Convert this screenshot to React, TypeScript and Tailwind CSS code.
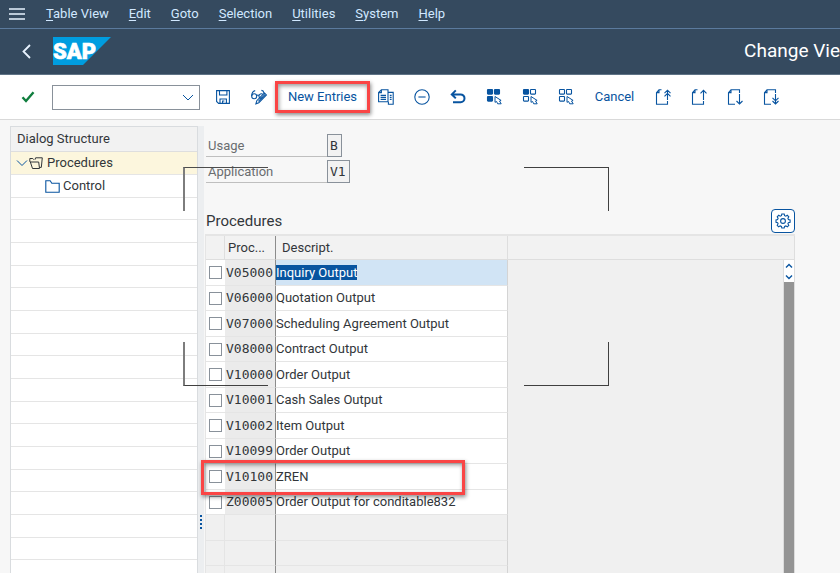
import React from "react";

const menus = ["Table View", "Edit", "Goto", "Selection", "Utilities", "System", "Help"];

const rows = [
  { code: "V05000", text: "Inquiry Output" },
  { code: "V06000", text: "Quotation Output" },
  { code: "V07000", text: "Scheduling Agreement Output" },
  { code: "V08000", text: "Contract Output" },
  { code: "V10000", text: "Order Output" },
  { code: "V10001", text: "Cash Sales Output" },
  { code: "V10002", text: "Item Output" },
  { code: "V10099", text: "Order Output" },
  { code: "V10100", text: "ZREN" },
  { code: "Z00005", text: "Order Output for conditable832" },
];
const emptyRows = 30;
const treeRows = 40;

function Icon({ children }: { children: React.ReactNode }) {
  return (
    <svg width="18" height="18" viewBox="0 0 18 18" fill="none" stroke="currentColor" strokeWidth="1.1" aria-hidden="true">
      {children}
    </svg>
  );
}

function ToolButton({ label, children }: { label: string; children: React.ReactNode }) {
  return (
    <button type="button" aria-label={label} className="flex h-9 w-9 shrink-0 items-center justify-center text-[#0854a0]">
      <Icon>{children}</Icon>
    </button>
  );
}

function Grid({ filled }: { filled: number }) {
  const cells = [
    [2.5, 1.5],
    [9.5, 1.5],
    [2.5, 8.5],
  ];
  const solid = [filled > 0, filled > 1, filled > 2];
  return (
    <>
      {cells.map(([x, y], i) => (
        <rect key={i} x={x} y={y} width="5" height="4.6" rx="0.6" fill={solid[i] ? "currentColor" : "none"} />
      ))}
      <path d="M10 8.500v5.800l1.600-.8 1.100 2.300h3.500l-1.700-2.800 1.600-.6z" strokeWidth="1" />
    </>
  );
}

const pagePath = "M7.500 1.800H5L2.500 4.600v11.600h11V13M5 1.800v2.800H2.500";
const pageDownPath = "M13.500 5V1.800H5L2.500 4.600v11.600H9M5 1.800v2.800H2.500";

function CommandBar() {
  return (
    <div className="flex h-[45px] shrink-0 items-center border-b border-[#d9d9d9] bg-white pl-[10px]">
      <button type="button" aria-label="Enter" className="flex h-9 w-9 shrink-0 items-center justify-center text-[#107e3e]">
        <svg width="14" height="12" viewBox="0 0 14 12" fill="none" stroke="currentColor" strokeWidth="2.4" aria-hidden="true">
          <path d="M1.5 6.2 5 10 12.5 1.2" />
        </svg>
      </button>
      <div className="ml-[6px] flex h-[25px] w-[148px] shrink-0 items-center border border-[#89919a] bg-white">
        <input aria-label="Command" className="h-full min-w-0 flex-1 px-1 text-[13px] outline-none" />
        <button type="button" aria-label="Show history" className="flex h-full w-[22px] items-center justify-center text-[#0854a0]">
          <svg width="12" height="7" viewBox="0 0 12 7" fill="none" stroke="currentColor" aria-hidden="true">
            <path d="M1 1l5 5 5-5" />
          </svg>
        </button>
      </div>
      <div className="w-[5px] shrink-0" />
      <ToolButton label="Save">
        <path d="M2.600 2.600h12.800v12.800H4.600l-2-2z" />
        <path d="M5.500 2.600v4.400h7.400V2.600M6 15.400v-4.400h6.400v4.400M8.600 15.400v-2.400h1.800" />
      </ToolButton>
      <ToolButton label="Display or change">
        <circle cx="4.200" cy="8.200" r="2.500" />
        <path d="M1.700 8C1.700 5 3.200 3 5.200 2.600M6.700 7.600c.8-.9 1.600-.9 2.300 0M12.600 9.400c-1.600 1.800-3.800.6-3.600-1.400 0-2 2.400-3 4-1.600M11.400 2.400c1.600.2 2.300 1.200 2.500 2.400" />
        <path d="M14.400 5l2 1.900-7.600 7.800-2.900 1.100.9-3.100z" />
        <path d="M8.400 13.300l6.600-6.800" />
      </ToolButton>
      <button type="button" className="relative flex h-9 w-[91px] shrink-0 items-center justify-center text-[13px] text-[#0854a0]">
        New Entries
        <span className="absolute -inset-x-[2px] inset-y-[2px] border-[3px] border-[#fa4545] shadow-[1px_2px_4px_rgba(0,0,0,0.45),inset_1px_2px_4px_rgba(0,0,0,0.4)]" />
      </button>
      <ToolButton label="Copy as">
        <path d="M4.400 1.800H11v12H1.600V4.600zM4.400 1.800v2.800H1.600M3.600 7.400h5.400M3.600 9.400h5.400M3.600 11.400h5.400M11 4.400h5.200v11.800h-4.800v-2.400M12.800 7.400h1.800M12.800 9.400h1.800M12.800 11.400h1.800" />
      </ToolButton>
      <ToolButton label="Delete">
        <circle cx="9" cy="9" r="7.200" />
        <path d="M5.400 9h7.200" />
      </ToolButton>
      <ToolButton label="Undo">
        <path d="M6.800 2.400 2.800 6.400l4 4M3 6.400h8.600a3.900 3.900 0 0 1 0 7.800H4" strokeWidth="2" />
      </ToolButton>
      <ToolButton label="Select all">
        <Grid filled={3} />
      </ToolButton>
      <ToolButton label="Select block">
        <Grid filled={1} />
      </ToolButton>
      <ToolButton label="Deselect all">
        <Grid filled={0} />
      </ToolButton>
      <button type="button" className="h-9 w-[61px] shrink-0 text-[13px] text-[#0854a0]">
        Cancel
      </button>
      <ToolButton label="First page">
        <path d={pagePath} />
        <path d="M13.500 12V2.400M10.500 5.200l3-3 3 3M10.500 8.400l3-3 3 3" />
      </ToolButton>
      <ToolButton label="Previous page">
        <path d={pagePath} />
        <path d="M13.500 12V2.400M10.500 5.400l3-3 3 3" />
      </ToolButton>
      <ToolButton label="Next page">
        <path d={pageDownPath} />
        <path d="M13.500 6v10M10.500 13l3 3 3-3" />
      </ToolButton>
      <ToolButton label="Last page">
        <path d={pageDownPath} />
        <path d="M13.500 6v10M10.500 13l3 3 3-3M10.500 9.800l3 3 3-3" />
      </ToolButton>
    </div>
  );
}

function treeHeight(i: number) {
  return i % 3 === 2 ? "h-[22px]" : "h-[23px]";
}

function Tree() {
  return (
    <nav aria-label="Dialog Structure" className="w-[188px] shrink-0 overflow-hidden border border-b-0 border-[#d9dcdf] bg-white text-[13px] text-[#32363a]">
      <h2 className="h-[25px] border-b border-[#dedede] bg-[#f2f2f2] pl-[6px] leading-6">Dialog Structure</h2>
      <ul>
        <li className="flex h-[23px] items-center border-b border-[#e5e5e5] bg-[#fcf6dd] pl-[5px]">
          <svg width="12" height="8" viewBox="0 0 12 8" fill="none" stroke="#0854a0" aria-hidden="true">
            <path d="M1 1.5l5 5 5-5" />
          </svg>
          <svg className="ml-[1px] mr-1" width="14" height="12" viewBox="0 0 14 12" fill="none" stroke="#32363a" aria-hidden="true">
            <path d="M3.500 11.500 1.200 4.500H.8v-3h3l1 1.200M3.500 11.500h7l-.8-6.500H1.400M6 2.700l.6-1.900h6.700l-1 9.600h-1.800" />
          </svg>
          Procedures
        </li>
        <li className="flex h-[23px] items-center border-b border-[#e5e5e5] pl-[34px]">
          <svg className="mr-[3px]" width="15" height="13" viewBox="0 0 15 13" fill="none" stroke="#0854a0" strokeWidth="1.1" aria-hidden="true">
            <path d="M.8 12.2V.8h4.4l1.600 2.400h7.400v9z" />
          </svg>
          Control
        </li>
        {Array.from({ length: treeRows }, (_, i) => (
          <li key={i} className={`border-b border-[#e5e5e5] ${treeHeight(i + 2)}`} />
        ))}
      </ul>
    </nav>
  );
}

function Field({ id, label, value, size }: { id: string; label: string; value: string; size: string }) {
  return (
    <div className="flex h-[23px] items-stretch">
      <label htmlFor={id} className="w-[121px] border-b border-[#bfbfbf] pl-[2px] text-[13px] leading-6 text-[#6a6d70]">
        {label}
      </label>
      <input id={id} readOnly defaultValue={value} className={`border border-[#89919a] bg-[#f2f2f2] pl-[2px] font-['DejaVu_Sans_Mono',monospace] text-[13px] text-[#32363a] outline-none ${size}`} />
    </div>
  );
}

function ProcedureTable() {
  const span = rows.length + emptyRows;
  return (
    <table className="w-full table-fixed border-separate border-spacing-0 border-l border-t-2 border-[#e5e5e5] text-[13px] text-[#32363a]">
      <colgroup>
        <col className="w-[19px]" />
        <col className="w-[51px]" />
        <col className="w-[232px]" />
        <col />
        <col className="w-[12px]" />
      </colgroup>
      <thead>
        <tr className="bg-[#f2f2f2] text-left">
          <th aria-label="Select" className="h-6 border-b border-r border-[#dedede] p-0" />
          <th className="border-b border-r border-b-[#dedede] border-r-[#8c8c8c] p-0 pl-[3px] font-normal">Proc...</th>
          <th className="border-b border-r border-[#dedede] p-0 pl-[6px] font-normal">Descript.</th>
          <th aria-label="Unused" colSpan={2} className="border-b border-r border-[#dedede] p-0" />
        </tr>
      </thead>
      <tbody>
        {Array.from({ length: span }, (_, i) => {
          const row = rows[i];
          const height = i % 2 === 0 ? "h-[26px]" : "h-[25px]";
          return (
            <tr key={i}>
              <td className={`border-b border-[#e5e5e5] p-0 ${height} ${row ? "bg-white" : "border-r bg-[#f0f0f0]"}`}>
                {row && (
                  <div className="relative flex items-center pl-[3px]">
                    <input type="checkbox" aria-label={`Select ${row.code}`} className="h-[13px] w-[13px] appearance-none border border-[#89919a] bg-white" />
                    {row.code === "V10100" && (
                      <span className="pointer-events-none absolute -left-[5px] -top-[10px] z-10 h-[35px] w-[264px] border-[3px] border-[#fa4545] shadow-[1px_2px_4px_rgba(0,0,0,0.45),inset_1px_2px_4px_rgba(0,0,0,0.4)]" />
                    )}
                  </div>
                )}
              </td>
              <td className={`border-b border-r border-r-[#8c8c8c] border-b-[#e5e5e5] p-0 pl-[1px] font-['DejaVu_Sans_Mono',monospace] leading-5 ${row ? "bg-[#ebebeb]" : "bg-[#f0f0f0]"}`}>
                {row?.code}
              </td>
              <td className={`border-b border-r border-b-[#e5e5e5] border-r-[#d4d4d4] p-0 leading-5 ${i === 0 ? "bg-[#d1e4f5]" : row ? "bg-white" : "bg-[#f0f0f0]"}`}>
                {i === 0 ? <mark className="bg-[#0854a0] text-white">{row.text}</mark> : row?.text}
              </td>
              {i === 0 && (
                <>
                  <td rowSpan={span} className="bg-[#f0f0f0] p-0" />
                  <td rowSpan={span} className="border-x border-[#dcdcdc] bg-[#949494] p-0 align-top">
                    <div className="flex flex-col bg-white text-[#0854a0]">
                      {["M1 4.5l3-3 3 3", "M1 1.5l3 3 3-3"].map((d, n) => (
                        <button key={d} type="button" aria-label={n ? "Scroll down" : "Scroll up"} className="flex h-[11px] items-center justify-center">
                          <svg width="8" height="6" viewBox="0 0 8 6" fill="none" stroke="currentColor" strokeWidth="1.4" aria-hidden="true">
                            <path d={d} />
                          </svg>
                        </button>
                      ))}
                    </div>
                  </td>
                </>
              )}
            </tr>
          );
        })}
      </tbody>
    </table>
  );
}

export default function App() {
  return (
    <div className="flex h-screen flex-col overflow-hidden bg-[#f7f7f7] font-['Roboto',sans-serif]">
      <nav aria-label="Menu" className="flex h-[29px] shrink-0 items-center border-b border-[#5b7a9d] bg-[#354a5f] pl-[9px] text-[13px] text-[#d1e8ff]">
        <button type="button" aria-label="Main menu" className="mr-[21px]">
          <svg width="16" height="12" viewBox="0 0 16 12" stroke="#e8f3ff" strokeWidth="1.5" aria-hidden="true">
            <path d="M0 1h16M0 6h16M0 11h16" />
          </svg>
        </button>
        <div className="flex gap-5">
          {menus.map((m) => (
            <button key={m} type="button">
              <u className="underline-offset-2">{m[0]}</u>
              {m.slice(1)}
            </button>
          ))}
        </div>
      </nav>
      <header className="flex h-[46px] shrink-0 items-center border-b border-[#5f7386] bg-[#354a5f] pl-[21px]">
        <button type="button" aria-label="Back" className="mr-[21px]">
          <svg width="11" height="15" viewBox="0 0 11 15" fill="none" stroke="#e8f3ff" strokeWidth="1.8" aria-hidden="true">
            <path d="M9 1 2.5 7.5 9 14" />
          </svg>
        </button>
        <svg className="mb-[2px]" width="58" height="28" viewBox="0 0 58 28" role="img" aria-label="SAP">
          <path d="M0 0h58L30 28H0z" fill="#009de0" />
          <text x="0" y="22" fill="#fff" stroke="#fff" strokeWidth="0.6" className="font-['Roboto',sans-serif] text-[22px] font-black">
            SAP
          </text>
        </svg>
        <h1 className="ml-auto whitespace-nowrap text-[19px] text-white">Change Vie</h1>
      </header>
      <CommandBar />
      <div className="relative flex min-h-0 flex-1 pl-[10px] pt-[6px]">
        <Tree />
        <div className="flex w-[6px] shrink-0 flex-col items-center bg-[#eceef0] pt-[389px]">
          <svg width="3" height="15" viewBox="0 0 3 15" fill="#0854a0" aria-hidden="true">
            <path d="M0 0h2v2H0zM0 4h2v2H0zM0 8h2v2H0zM0 12h2v2H0z" />
          </svg>
        </div>
        <main className="ml-[1px] mr-[45px] min-w-0 flex-1">
          <div className="flex flex-col gap-[3px] pl-[1px] pt-2">
            <Field id="usage" label="Usage" value="B" size="w-[15px]" />
            <Field id="application" label="Application" value="V1" size="w-[23px]" />
          </div>
          <div className="mb-[1px] mt-[26px] flex h-6 items-center justify-between pl-[1px]">
            <h2 className="text-[15px] text-[#32363a]">Procedures</h2>
            <button type="button" aria-label="Settings" className="flex h-6 w-6 items-center justify-center rounded border border-[#0854a0] bg-white text-[#0854a0]">
              <svg width="16" height="16" viewBox="0 0 16 16" fill="none" stroke="currentColor" strokeWidth="1.1" aria-hidden="true">
                <circle cx="8" cy="8" r="2.4" />
                <path d="M6.8 1h2.400l.4 1.700 1.200.5 1.500-.9 1.500 1.500-.9 1.500.5 1.200 1.700.4v2.300l-1.700.4-.5 1.200.9 1.500-1.500 1.500-1.500-.9-1.200.5L9.200 15H6.800l-.4-1.600-1.200-.5-1.500.9-1.500-1.500.9-1.500-.5-1.200L1 9.200V6.900l1.600-.4.5-1.200-.9-1.500 1.500-1.500 1.500.9 1.200-.5z" />
              </svg>
            </button>
          </div>
          <ProcedureTable />
        </main>
        <div aria-hidden="true" className="pointer-events-none absolute left-[183px] top-[47px] h-[219px] w-[426px]">
          <span className="absolute left-0 top-0 h-11 w-[85px] border-l-2 border-t border-l-[#7d7d7d] border-t-[#4d4d4d]" />
          <span className="absolute right-0 top-0 h-11 w-[85px] border-r border-t border-[#404040]" />
          <span className="absolute bottom-0 left-0 h-11 w-[85px] border-b border-l-2 border-b-[#404040] border-l-[#7d7d7d]" />
          <span className="absolute bottom-0 right-0 h-11 w-[85px] border-b border-r border-[#404040]" />
        </div>
      </div>
    </div>
  );
}
